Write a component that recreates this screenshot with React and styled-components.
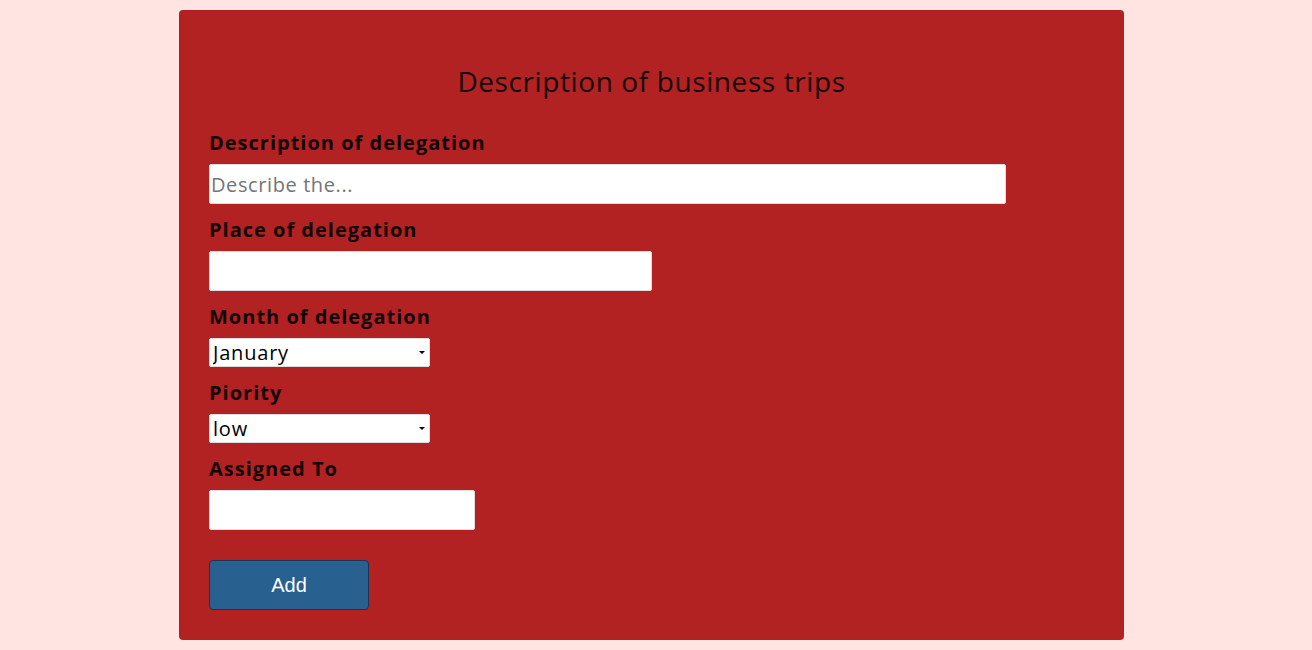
import React, { useState } from 'react';
import styled, { createGlobalStyle } from 'styled-components';

const months = ['January', 'February', 'March', 'April', 'May', 'June', 'July', 'August', 'September', 'October', 'November', 'December'];
const priorities = ['low', 'medium', 'high'];

function App() {
  const [description, setDescription] = useState('');
  const [place, setPlace] = useState('');
  const [month, setMonth] = useState('January');
  const [priority, setPriority] = useState('low');
  const [assigned, setAssigned] = useState('');

  const handleSubmit = (e) => {
    e.preventDefault();
  };

  return (
    <>
      <GlobalStyle />
      <Card onSubmit={handleSubmit}>
        <Title>Description of business trips</Title>

        <Field>
          <Label>Description of delegation</Label>
          <TextInput
            $width="90%"
            placeholder="Describe the..."
            value={description}
            onChange={(e) => setDescription(e.target.value)}
          />
        </Field>

        <Field>
          <Label>Place of delegation</Label>
          <TextInput $width="50%" value={place} onChange={(e) => setPlace(e.target.value)} />
        </Field>

        <Field>
          <Label>Month of delegation</Label>
          <SelectWrap>
            <Select value={month} onChange={(e) => setMonth(e.target.value)}>
              {months.map((m) => (
                <option key={m}>{m}</option>
              ))}
            </Select>
          </SelectWrap>
        </Field>

        <Field>
          <Label>Piority</Label>
          <SelectWrap>
            <Select value={priority} onChange={(e) => setPriority(e.target.value)}>
              {priorities.map((p) => (
                <option key={p}>{p}</option>
              ))}
            </Select>
          </SelectWrap>
        </Field>

        <Field>
          <Label>Assigned To</Label>
          <TextInput $width="30%" value={assigned} onChange={(e) => setAssigned(e.target.value)} />
        </Field>

        <AddButton type="submit">Add</AddButton>
      </Card>
    </>
  );
}

export default App;

const GlobalStyle = createGlobalStyle`
  html, body {
    margin: 0;
    background-color: #ffe4e1;
  }
  body {
    font-family: "Open Sans", "DejaVu Sans", sans-serif;
    padding: 10px 0;
  }
`;

const Card = styled.form`
  box-sizing: border-box;
  width: 945px;
  margin-left: 179px;
  padding: 30px;
  background-color: #b22222;
  border-radius: 4px;
`;

const Title = styled.h2`
  margin: 22px 0 29px;
  font-size: 28px;
  line-height: 38px;
  font-weight: 400;
  letter-spacing: 0.6px;
  text-align: center;
  color: #140606;
`;

const Field = styled.div`
  margin-bottom: 12px;
`;

const Label = styled.label`
  display: block;
  margin-bottom: 8px;
  font-size: 20px;
  line-height: 27px;
  font-weight: 700;
  letter-spacing: 1px;
  color: #120505;
`;

const TextInput = styled.input`
  display: block;
  box-sizing: border-box;
  width: ${(p) => p.$width};
  height: 40px;
  padding: 0 1px;
  border: 1px solid #ddd;
  border-radius: 2px;
  background: #fff;
  font-family: "Open Sans", sans-serif;
  font-size: 20px;
  letter-spacing: 0.6px;
  color: #000;
  outline: 0;

  &::placeholder {
    color: #757575;
  }
`;

const SelectWrap = styled.div`
  position: relative;
  width: 25%;

  &::after {
    content: '';
    position: absolute;
    right: 5px;
    top: 13px;
    border-left: 3px solid transparent;
    border-right: 3px solid transparent;
    border-top: 3px solid #000;
    pointer-events: none;
  }
`;

const Select = styled.select`
  appearance: none;
  display: block;
  box-sizing: border-box;
  width: 100%;
  height: 29px;
  padding: 0 0 0 3px;
  border: 1px solid #ddd;
  border-radius: 2px;
  background: #fff;
  font-family: "Open Sans", sans-serif;
  font-size: 20px;
  letter-spacing: 0.8px;
  color: #000;
  outline: 0;
`;

const AddButton = styled.button`
  display: block;
  box-sizing: border-box;
  width: 160px;
  height: 50px;
  margin-top: 30px;
  border: 1px solid #1c3354;
  border-radius: 4px;
  background-color: #286090;
  color: #fff;
  font-family: "Liberation Sans", Arial, sans-serif;
  font-size: 20px;
  cursor: pointer;
`;
